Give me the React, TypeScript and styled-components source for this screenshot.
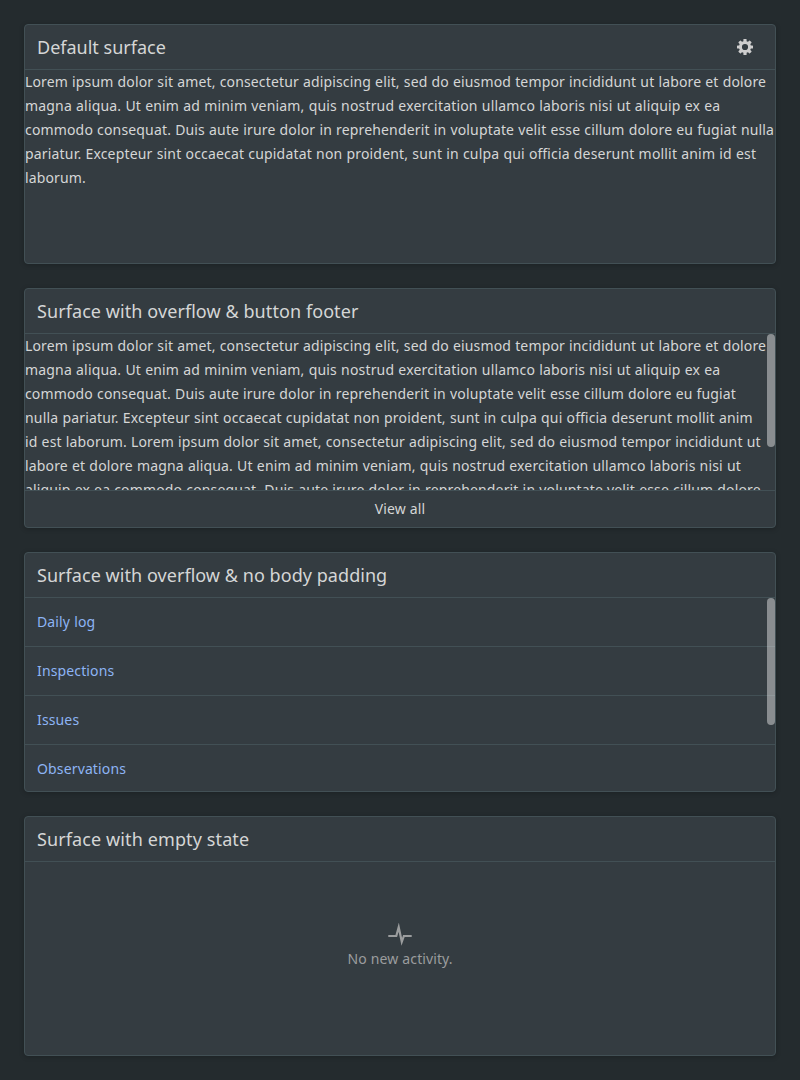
import React from "react";
import styled, { createGlobalStyle } from "styled-components";

const GlobalStyle = createGlobalStyle`
  * { box-sizing: border-box; }
  body {
    margin: 0;
    background: #242b2e;
    color: #d5d6d6;
    font: 14px/24px "Noto Sans", sans-serif;
    font-feature-settings: "liga" 1;
    letter-spacing: 0.14px;
    word-spacing: 0.3px;
  }
`;

const Page = styled.main`
  display: flex;
  flex-direction: column;
  gap: 24px;
  padding: 24px;
`;

const Surface = styled.section`
  display: flex;
  flex-direction: column;
  height: 240px;
  overflow: hidden;
  background: #343c41;
  border: 1px solid #425055;
  border-radius: 4px;
  box-shadow: 0 1px 5px rgba(0, 0, 0, 0.22);
`;

const Header = styled.header`
  display: flex;
  flex: none;
  align-items: center;
  justify-content: space-between;
  height: 45px;
  padding: 0 12px;
  border-bottom: 1px solid #425055;
`;

const Title = styled.h2<{ $tracking?: number }>`
  margin: 0;
  font-size: 18px;
  font-weight: 400;
  line-height: 24px;
  letter-spacing: ${(p) => p.$tracking ?? 0}px;
  word-spacing: 0;
`;

const IconButton = styled.button`
  display: flex;
  align-items: center;
  justify-content: center;
  width: 36px;
  height: 36px;
  padding: 0;
  border: 0;
  background: none;
  color: #cecece;
`;

const Body = styled.div`
  position: relative;
  flex: 1;
  min-height: 0;
  overflow: hidden;
`;

const Text = styled.p`
  margin: 0;
`;

const Line = styled.span<{ $tracking: number }>`
  display: block;
  white-space: nowrap;
  letter-spacing: ${(p) => p.$tracking}px;
`;

const ScrollThumb = styled.div<{ $height: number }>`
  position: absolute;
  top: 0;
  right: 0;
  width: 8px;
  height: ${(p) => p.$height}px;
  border-radius: 4px;
  background: rgba(255, 255, 255, 0.42);
`;

const FooterButton = styled.button`
  flex: none;
  height: 37px;
  padding: 0;
  border: 0;
  border-top: 1px solid #425055;
  background: none;
  color: inherit;
  font: inherit;
  letter-spacing: inherit;
`;

const List = styled.ul`
  margin: 0;
  padding: 0;
  list-style: none;
`;

const Item = styled.li`
  height: 49px;
  padding: 12px;
  border-bottom: 1px solid #425055;
`;

const Link = styled.a`
  color: #8db4f4;
  text-decoration: none;
`;

const Empty = styled.div`
  display: flex;
  flex: 1;
  flex-direction: column;
  align-items: center;
  justify-content: center;
  padding-bottom: 24px;
  color: #9b9d9e;
  letter-spacing: 0.1px;
`;

type TextLine = [text: string, tracking: number];

const shortText: TextLine[] = [
  ["Lorem ipsum dolor sit amet, consectetur adipiscing elit, sed do eiusmod tempor incididunt ut labore et dolore", 0.145],
  ["magna aliqua. Ut enim ad minim veniam, quis nostrud exercitation ullamco laboris nisi ut aliquip ex ea", 0.18],
  ["commodo consequat. Duis aute irure dolor in reprehenderit in voluptate velit esse cillum dolore eu fugiat nulla", 0.157],
  ["pariatur. Excepteur sint occaecat cupidatat non proident, sunt in culpa qui officia deserunt mollit anim id est", 0.177],
  ["laborum.", 0.14],
];

const longText: TextLine[] = [
  shortText[0],
  shortText[1],
  ["commodo consequat. Duis aute irure dolor in reprehenderit in voluptate velit esse cillum dolore eu fugiat", 0.15],
  ["nulla pariatur. Excepteur sint occaecat cupidatat non proident, sunt in culpa qui officia deserunt mollit anim", 0.18],
  ["id est laborum. Lorem ipsum dolor sit amet, consectetur adipiscing elit, sed do eiusmod tempor incididunt ut", 0.15],
  ["labore et dolore magna aliqua. Ut enim ad minim veniam, quis nostrud exercitation ullamco laboris nisi ut", 0.16],
  ["aliquip ex ea commodo consequat. Duis aute irure dolor in reprehenderit in voluptate velit esse cillum dolore", 0.15],
];

const Paragraph = ({ lines }: { lines: TextLine[] }) => (
  <Text>
    {lines.map(([text, tracking]) => (
      <Line key={text} $tracking={tracking}>
        {text}
      </Line>
    ))}
  </Text>
);

const links = ["Daily log", "Inspections", "Issues", "Observations"];

const toothAngles = [0, 45, 90, 135];

const CogIcon = () => (
  <svg width="16" height="16" viewBox="0 0 16 16" fill="currentColor" aria-hidden="true">
    <circle cx="8" cy="8" r="4.6" fill="none" stroke="currentColor" strokeWidth="3" />
    {toothAngles.map((angle) => (
      <g key={angle} transform={`rotate(${angle} 8 8)`}>
        <rect x="6.4" y="0" width="3.2" height="3" rx="0.6" />
        <rect x="6.4" y="13" width="3.2" height="3" rx="0.6" />
      </g>
    ))}
  </svg>
);

const PulseIcon = () => (
  <svg width="24" height="24" viewBox="0 0 24 24" fill="none" stroke="currentColor" strokeWidth="2.2" aria-hidden="true">
    <path d="M1.1 13h7.2L10.7 4.2l3.1 14.6 2.1-5.8h7" strokeLinecap="round" strokeMiterlimit="10" />
  </svg>
);

export default function App() {
  return (
    <>
      <GlobalStyle />
      <Page>
        <Surface>
          <Header>
            <Title>Default surface</Title>
            <IconButton aria-label="Settings">
              <CogIcon />
            </IconButton>
          </Header>
          <Body>
            <Paragraph lines={shortText} />
          </Body>
        </Surface>
        <Surface>
          <Header>
            <Title $tracking={0.08}>Surface with overflow &amp; button footer</Title>
          </Header>
          <Body>
            <Paragraph lines={longText} />
            <ScrollThumb $height={113} />
          </Body>
          <FooterButton>View all</FooterButton>
        </Surface>
        <Surface>
          <Header>
            <Title $tracking={0.05}>Surface with overflow &amp; no body padding</Title>
          </Header>
          <Body>
            <List>
              {links.map((name) => (
                <Item key={name}>
                  <Link href="#">{name}</Link>
                </Item>
              ))}
            </List>
            <ScrollThumb $height={127} />
          </Body>
        </Surface>
        <Surface>
          <Header>
            <Title $tracking={0.11}>Surface with empty state</Title>
          </Header>
          <Empty>
            <PulseIcon />
            <span>No new activity.</span>
          </Empty>
        </Surface>
      </Page>
    </>
  );
}
